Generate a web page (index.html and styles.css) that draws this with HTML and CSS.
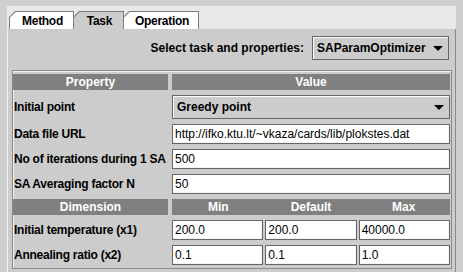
FILE: index.html
```html
<!DOCTYPE html>
<html>
<head>
<meta charset="utf-8">
<link rel="stylesheet" href="styles.css">
</head>
<body>
<div class="frame">
  <div class="tabbar">
    <div class="tab"><span class="tab-in">Method</span></div>
    <div class="tab active"><span class="tab-in">Task</span></div>
    <div class="tab"><span class="tab-in">Operation</span></div>
  </div>
  <div class="panel">
    <div class="select-row">
      <span class="label">Select task and properties:</span>
      <div class="combo top-combo">
        <span>SAParamOptimizer</span>
        <svg class="arrow" width="10" height="5" viewBox="0 0 10 5"><path d="M0 0H10L5 5Z" fill="#000"/></svg>
      </div>
    </div>
    <div class="table">
      <div class="hdr">Property</div>
      <div class="hdr">Value</div>

      <div class="lbl">Initial point</div>
      <div class="combo row-combo">
        <span>Greedy point</span>
        <svg class="arrow" width="10" height="5" viewBox="0 0 10 5"><path d="M0 0H10L5 5Z" fill="#000"/></svg>
      </div>

      <div class="lbl">Data file URL</div>
      <div class="field">http://ifko.ktu.lt/~vkaza/cards/lib/plokstes.dat</div>

      <div class="lbl">No of iterations during 1 SA</div>
      <div class="field">500</div>

      <div class="lbl">SA Averaging factor N</div>
      <div class="field">50</div>

      <div class="hdr">Dimension</div>
      <div class="hdr hdr3"><span>Min</span><span>Default</span><span>Max</span></div>

      <div class="lbl">Initial temperature (x1)</div>
      <div class="trio">
        <div class="field">200.0</div>
        <div class="field">200.0</div>
        <div class="field">40000.0</div>
      </div>

      <div class="lbl">Annealing ratio (x2)</div>
      <div class="trio">
        <div class="field">0.1</div>
        <div class="field">0.1</div>
        <div class="field">1.0</div>
      </div>
    </div>
  </div>
</div>
</body>
</html>
```

FILE: styles.css
```css
html, body {
  margin: 0;
  padding: 0;
}
body {
  background: #cfcfcf;
  font-family: "Liberation Sans", Arial, sans-serif;
  font-size: 12px;
  color: #000;
}
.frame {
  width: 463px;
  height: 272px;
  box-sizing: border-box;
  padding: 6px 7px 0 7px;
  background: #cfcfcf;
  overflow: hidden;
  display: flex;
  flex-direction: column;
}
.tabbar {
  height: 23px;
  background: #e8e8e8;
  display: flex;
  align-items: flex-end;
  padding-left: 2px;
  flex: none;
}
.tab {
  height: 18px;
  box-sizing: border-box;
  background: #7c7c7c;
  padding: 1px 1px 0 1px;
  margin-right: -1px;
  clip-path: polygon(6px 0, 100% 0, 100% 100%, 0 100%, 0 6px);
  display: flex;
}
.tab:nth-child(1) { width: 65px; }
.tab:nth-child(2) { width: 51px; }
.tab:nth-child(3) { width: 76px; }
.tab-in {
  flex: 1;
  background: #ffffff;
  clip-path: polygon(5.6px 0, 100% 0, 100% 100%, 0 100%, 0 5.6px);
  font-weight: bold;
  letter-spacing: -0.3px;
  display: flex;
  align-items: center;
  justify-content: center;
  padding: 1px 0 0 2px;
  box-sizing: border-box;
}
.tab.active .tab-in {
  background: #cccccc;
}
.panel {
  flex: 1;
  background: #cccccc;
  border-left: 1px solid #f2f2f2;
  border-right: 1px solid #8a8a8a;
  padding-top: 7px;
  box-sizing: border-box;
}
.select-row {
  display: flex;
  justify-content: flex-end;
  align-items: center;
  gap: 8px;
  height: 24px;
  padding-right: 6px;
  margin-bottom: 10px;
}
.label {
  font-weight: bold;
}
.combo {
  box-sizing: border-box;
  background: #cccccc;
  border: 1px solid #666666;
  box-shadow: inset 1px 1px 0 #ffffff;
  display: flex;
  align-items: center;
  justify-content: space-between;
  font-weight: bold;
  padding: 0 5px 0 4px;
}
.top-combo {
  width: 137px;
  height: 24px;
}
.row-combo {
  height: 24px;
}
.arrow {
  display: block;
}
.table {
  margin: 0 3px 0 4px;
  border: 1px solid #8a8a8a;
  box-shadow: inset 1px 1px 0 #eeeeee;
  padding: 3px 2px 3px 0;
  display: grid;
  grid-template-columns: 155px 278px;
  column-gap: 4px;
  row-gap: 5px;
  align-items: center;
}
.hdr {
  height: 16px;
  background: #808080;
  color: #ffffff;
  font-weight: bold;
  display: flex;
  align-items: center;
  justify-content: center;
}
.hdr3 {
  display: grid;
  grid-template-columns: 1fr 1fr 1fr;
  justify-items: center;
}
.lbl {
  font-weight: bold;
  white-space: nowrap;
  letter-spacing: -0.25px;
  padding-left: 1px;
}
.field {
  box-sizing: border-box;
  height: 20px;
  background: #ffffff;
  border: 1px solid #666666;
  box-shadow: inset -1px -1px 0 #f4f4f4;
  padding: 0 2px;
  display: flex;
  align-items: center;
  white-space: nowrap;
  overflow: hidden;
}
.trio {
  display: grid;
  grid-template-columns: 1fr 1fr 1fr;
  gap: 2px;
}
```
